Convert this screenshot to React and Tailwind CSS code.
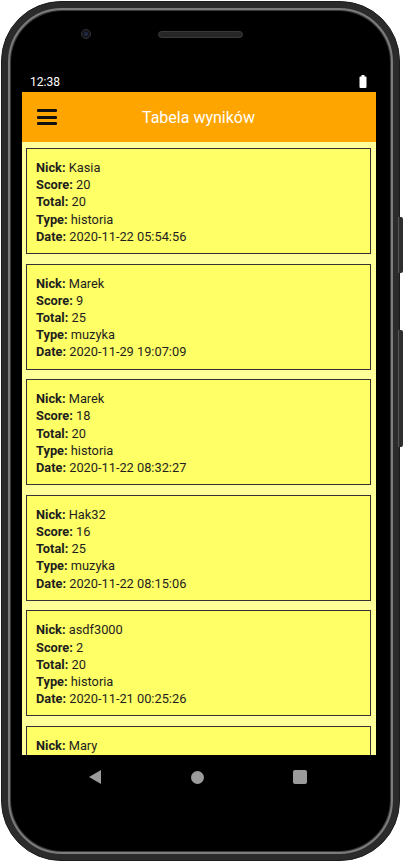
import React from "react";

const rows = [
  { nick: "Kasia", score: "20", total: "20", type: "historia", date: "2020-11-22 05:54:56" },
  { nick: "Marek", score: "9", total: "25", type: "muzyka", date: "2020-11-29 19:07:09" },
  { nick: "Marek", score: "18", total: "20", type: "historia", date: "2020-11-22 08:32:27" },
  { nick: "Hak32", score: "16", total: "25", type: "muzyka", date: "2020-11-22 08:15:06" },
  { nick: "asdf3000", score: "2", total: "20", type: "historia", date: "2020-11-21 00:25:26" },
  { nick: "Mary", score: "5", total: "20", type: "muzyka", date: "2020-11-20 10:11:12" },
];

function Line({ label, value }) {
  return (
    <div className="whitespace-nowrap">
      <span className="font-bold">{label}:</span> {value}
    </div>
  );
}

function Card({ r }) {
  return (
    <div className="shrink-0 h-[106px] border border-[#333] bg-[#ffff66] pl-[9px] pt-[10px] text-[12.8px] leading-[17.2px] text-[#1e1e1e]">
      <Line label="Nick" value={r.nick} />
      <Line label="Score" value={r.score} />
      <Line label="Total" value={r.total} />
      <Line label="Type" value={r.type} />
      <Line label="Date" value={r.date} />
    </div>
  );
}

export default function App() {
  return (
    <div
      className="relative w-[403px] h-[863px] bg-white overflow-hidden"
      style={{ fontFamily: "Roboto, 'Noto Sans', sans-serif" }}
    >
      {/* side buttons */}
      <div className="absolute left-[398px] top-[217px] w-[5px] h-[56px] rounded-r-[2px] bg-[#2e2e2e] border-l border-[#555]" />
      <div className="absolute left-[398px] top-[330px] w-[5px] h-[117px] rounded-r-[2px] bg-[#2e2e2e] border-l border-[#555]" />

      <div className="ml-[1px] mt-[1px] w-[399px] h-[860px] rounded-[60px] bg-[#2b2b2b] border border-[#1c1c1c] p-[6px]">
        <div className="h-full rounded-[54px] border-2 border-[#7c7c7c] p-[1px] bg-[#3a3a3a]">
          <div className="relative h-full rounded-[51px] bg-black flex flex-col">
            {/* camera + speaker */}
            <div className="absolute left-[70px] top-[18px] w-[10px] h-[10px] rounded-full bg-[#14141e] border border-[#333]">
              <div className="ml-[2px] mt-[2px] w-[4px] h-[4px] rounded-full bg-[#1e2a44]" />
            </div>
            <div className="absolute left-[147px] top-[20px] w-[85px] h-[7px] rounded-full bg-[#262626] border border-[#3a3a3a]" />

            {/* screen */}
            <div className="ml-[11px] mt-[59px] w-[354px] flex flex-col">
              {/* status bar */}
              <div className="h-[22px] flex items-center justify-between pl-[8px] pr-[9px] text-white text-[12px]">
                <span className="mt-[1px]">12:38</span>
                <svg width="8" height="13" viewBox="0 0 8 13">
                  <rect x="2.5" y="0" width="3" height="2" fill="#fff" />
                  <rect x="0.5" y="1.5" width="7" height="11.5" rx="1" fill="#fff" />
                </svg>
              </div>
              {/* app bar */}
              <div className="relative h-[50px] bg-[#ffa500] flex items-center justify-center">
                <div className="absolute left-[15px] top-[17px] w-[20px] flex flex-col gap-[3.5px]">
                  <div className="h-[3px] rounded-[1px] bg-[#111]" />
                  <div className="h-[3px] rounded-[1px] bg-[#111]" />
                  <div className="h-[3px] rounded-[1px] bg-[#111]" />
                </div>
                <span className="text-white text-[16px] ml-[-1px] mt-[2px]">Tabela wyników</span>
              </div>
              {/* content */}
              <div className="h-[613px] overflow-hidden bg-[#ffff99] pt-[6px] pl-[4px] pr-[5px] flex flex-col gap-[9.6px]">
                {rows.map((r, i) => (
                  <Card key={i} r={r} />
                ))}
              </div>
              {/* nav bar */}
              <div className="h-[44px] flex items-center">
                <svg className="ml-[66px]" width="14" height="16" viewBox="0 0 14 16">
                  <path d="M13 1 L1 8 L13 15 Z" fill="#9b9b9b" />
                </svg>
                <div className="ml-[89px] w-[13px] h-[13px] rounded-full bg-[#9b9b9b]" />
                <div className="ml-[89px] w-[14px] h-[14px] rounded-[2px] bg-[#9b9b9b]" />
              </div>
            </div>
          </div>
        </div>
      </div>
    </div>
  );
}
